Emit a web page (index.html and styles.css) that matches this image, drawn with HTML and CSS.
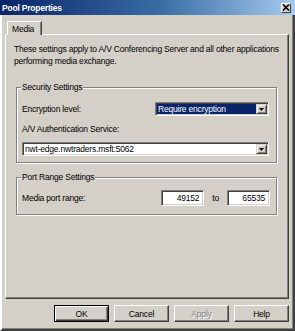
FILE: index.html
```html
<!DOCTYPE html>
<html lang="en">
<head>
  <meta charset="UTF-8">
  <meta name="viewport" content="width=device-width, initial-scale=1.0">
  <title>Pool Properties</title>
  <link rel="stylesheet" href="styles.css">
</head>
<body>
  <div class="window">
    <div class="titlebar">
      <span class="title">Pool Properties</span>
      <span class="close">
        <svg width="8" height="7" viewBox="0 0 8 7"><path d="M1 0.5 L7 6.5 M7 0.5 L1 6.5" stroke="#000" stroke-width="1.6"/></svg>
      </span>
    </div>
    <div class="frame">
      <div class="tabs"><div class="tab active">Media</div></div>
      <div class="panel">
        <p class="intro">These settings apply to A/V Conferencing Server and all other applications<br>performing media exchange.</p>
        <fieldset class="group security">
          <legend>Security Settings</legend>
          <div class="row">
            <span>Encryption level:</span>
            <div class="select level">
              <span class="value">Require encryption</span>
              <span class="arrow"><svg width="5" height="3" viewBox="0 0 5 3"><path d="M0 0 H5 L2.5 3 Z" fill="#000"/></svg></span>
            </div>
          </div>
          <div class="label">A/V Authentication Service:</div>
          <div class="select combo">
            <span class="value">nwt-edge.nwtraders.msft:5062</span>
            <span class="arrow"><svg width="5" height="3" viewBox="0 0 5 3"><path d="M0 0 H5 L2.5 3 Z" fill="#000"/></svg></span>
          </div>
        </fieldset>
        <fieldset class="group port">
          <legend>Port Range Settings</legend>
          <div class="row">
            <span>Media port range:</span>
            <div class="range">
              <span class="field">49152</span>
              <span>to</span>
              <span class="field">65535</span>
            </div>
          </div>
        </fieldset>
      </div>
      <div class="buttons">
        <button class="btn default">OK</button>
        <button class="btn">Cancel</button>
        <button class="btn" disabled>Apply</button>
        <button class="btn">Help</button>
      </div>
    </div>
  </div>
</body>
</html>
```

FILE: styles.css
```css
body { margin: 0; font-family: "Liberation Sans", Arial, sans-serif; font-size: 8.5px; letter-spacing: -0.2px; color: #000; background: #d4d0c8; }
.window { width: 295px; height: 331px; background: #d4d0c8; display: flex; flex-direction: column; overflow: hidden; }

/* title bar */
.titlebar { height: 15px; flex: none; display: flex; align-items: center; justify-content: space-between; padding: 0 4px 0 2px; background: linear-gradient(to right, #0a246a, #3a6ea5 55%, #a6caf0); }
.title { color: #fff; font-weight: bold; font-size: 8.5px; }
.close { width: 10px; height: 10px; box-sizing: border-box; background: #d4d0c8; border: 1px solid; border-color: #fff #404040 #404040 #fff; display: flex; align-items: center; justify-content: center; }

/* frame below title */
.frame { flex: 1; border-left: 2px solid #fff; border-right: 2px solid #404040; border-bottom: 2px solid #404040; padding: 6px 4px 0 3px; box-shadow: inset -1px -1px 0 #808080; }

/* tabs */
.tabs { display: flex; padding-left: 2px; }
.tab { height: 14px; box-sizing: border-box; padding: 0 5px 0 4px; display: flex; align-items: center; border: 1px solid; border-bottom: none; border-color: #fff #404040 #fff #fff; box-shadow: inset -1px 0 0 #808080; background: #d4d0c8; margin-bottom: -1px; position: relative; z-index: 1; }
.tab.active { width: 35px; }

.panel { height: 265px; box-sizing: border-box; border: 1px solid; border-color: #fff #404040 #404040 #fff; box-shadow: inset -1px -1px 0 #808080; padding: 8px 10px 0 8px; }
.intro { margin: 0; line-height: 12px; white-space: nowrap; }

/* group boxes */
.group { margin: 0 1px 0 2px; border: 1px solid #808080; box-shadow: 1px 1px 0 #fff, inset 1px 1px 0 #fff; }
.group legend { padding: 0 1px; margin-left: -1px; line-height: 12px; background: #d4d0c8; }
.security { margin-top: 14px; padding: 9px 7px 6px 5px; }
.port { margin-top: 8px; padding: 7px 6px 8px 5px; }
.row { display: flex; align-items: center; justify-content: space-between; }
.label { margin-top: 7px; line-height: 12px; }

/* combo boxes */
.select { height: 14px; box-sizing: border-box; display: flex; background: #fff; border: 1px solid; border-color: #808080 #fff #fff #808080; box-shadow: inset 1px 1px 0 #404040, inset -1px -1px 0 #d4d0c8; padding: 1px; }
.select .value { flex: 1; display: flex; align-items: center; padding-left: 1px; white-space: nowrap; overflow: hidden; }
.select .arrow { width: 11px; flex: none; box-sizing: border-box; display: flex; align-items: center; justify-content: center; background: #d4d0c8; border: 1px solid; border-color: #d4d0c8 #404040 #404040 #d4d0c8; box-shadow: inset 1px 1px 0 #fff, inset -1px -1px 0 #808080; }
.level { width: 114px; }
.level .value { background: #0a246a; color: #fff; }
.combo { margin-top: 7px; }

/* port fields */
.range { display: flex; align-items: center; gap: 8px; }
.field { width: 43px; height: 16px; box-sizing: border-box; background: #fff; border: 1px solid; border-color: #808080 #fff #fff #808080; box-shadow: inset 1px 1px 0 #404040, inset -1px -1px 0 #d4d0c8; display: flex; align-items: center; justify-content: flex-end; padding-right: 4px; }

/* dialog buttons */
.buttons { display: flex; justify-content: flex-end; gap: 5px; margin-top: 6px; }
.btn { width: 55px; height: 17px; padding: 0; font-family: inherit; font-size: 8.5px; letter-spacing: inherit; color: #000; background: #d4d0c8; border: 1px solid; border-color: #fff #404040 #404040 #fff; box-shadow: inset -1px -1px 0 #808080; }
.btn.default { border-color: #000; box-shadow: inset 1px 1px 0 #fff, inset -1px -1px 0 #404040, inset -2px -2px 0 #808080; }
.btn:disabled { color: #808080; text-shadow: 1px 1px 0 #fff; }
```
